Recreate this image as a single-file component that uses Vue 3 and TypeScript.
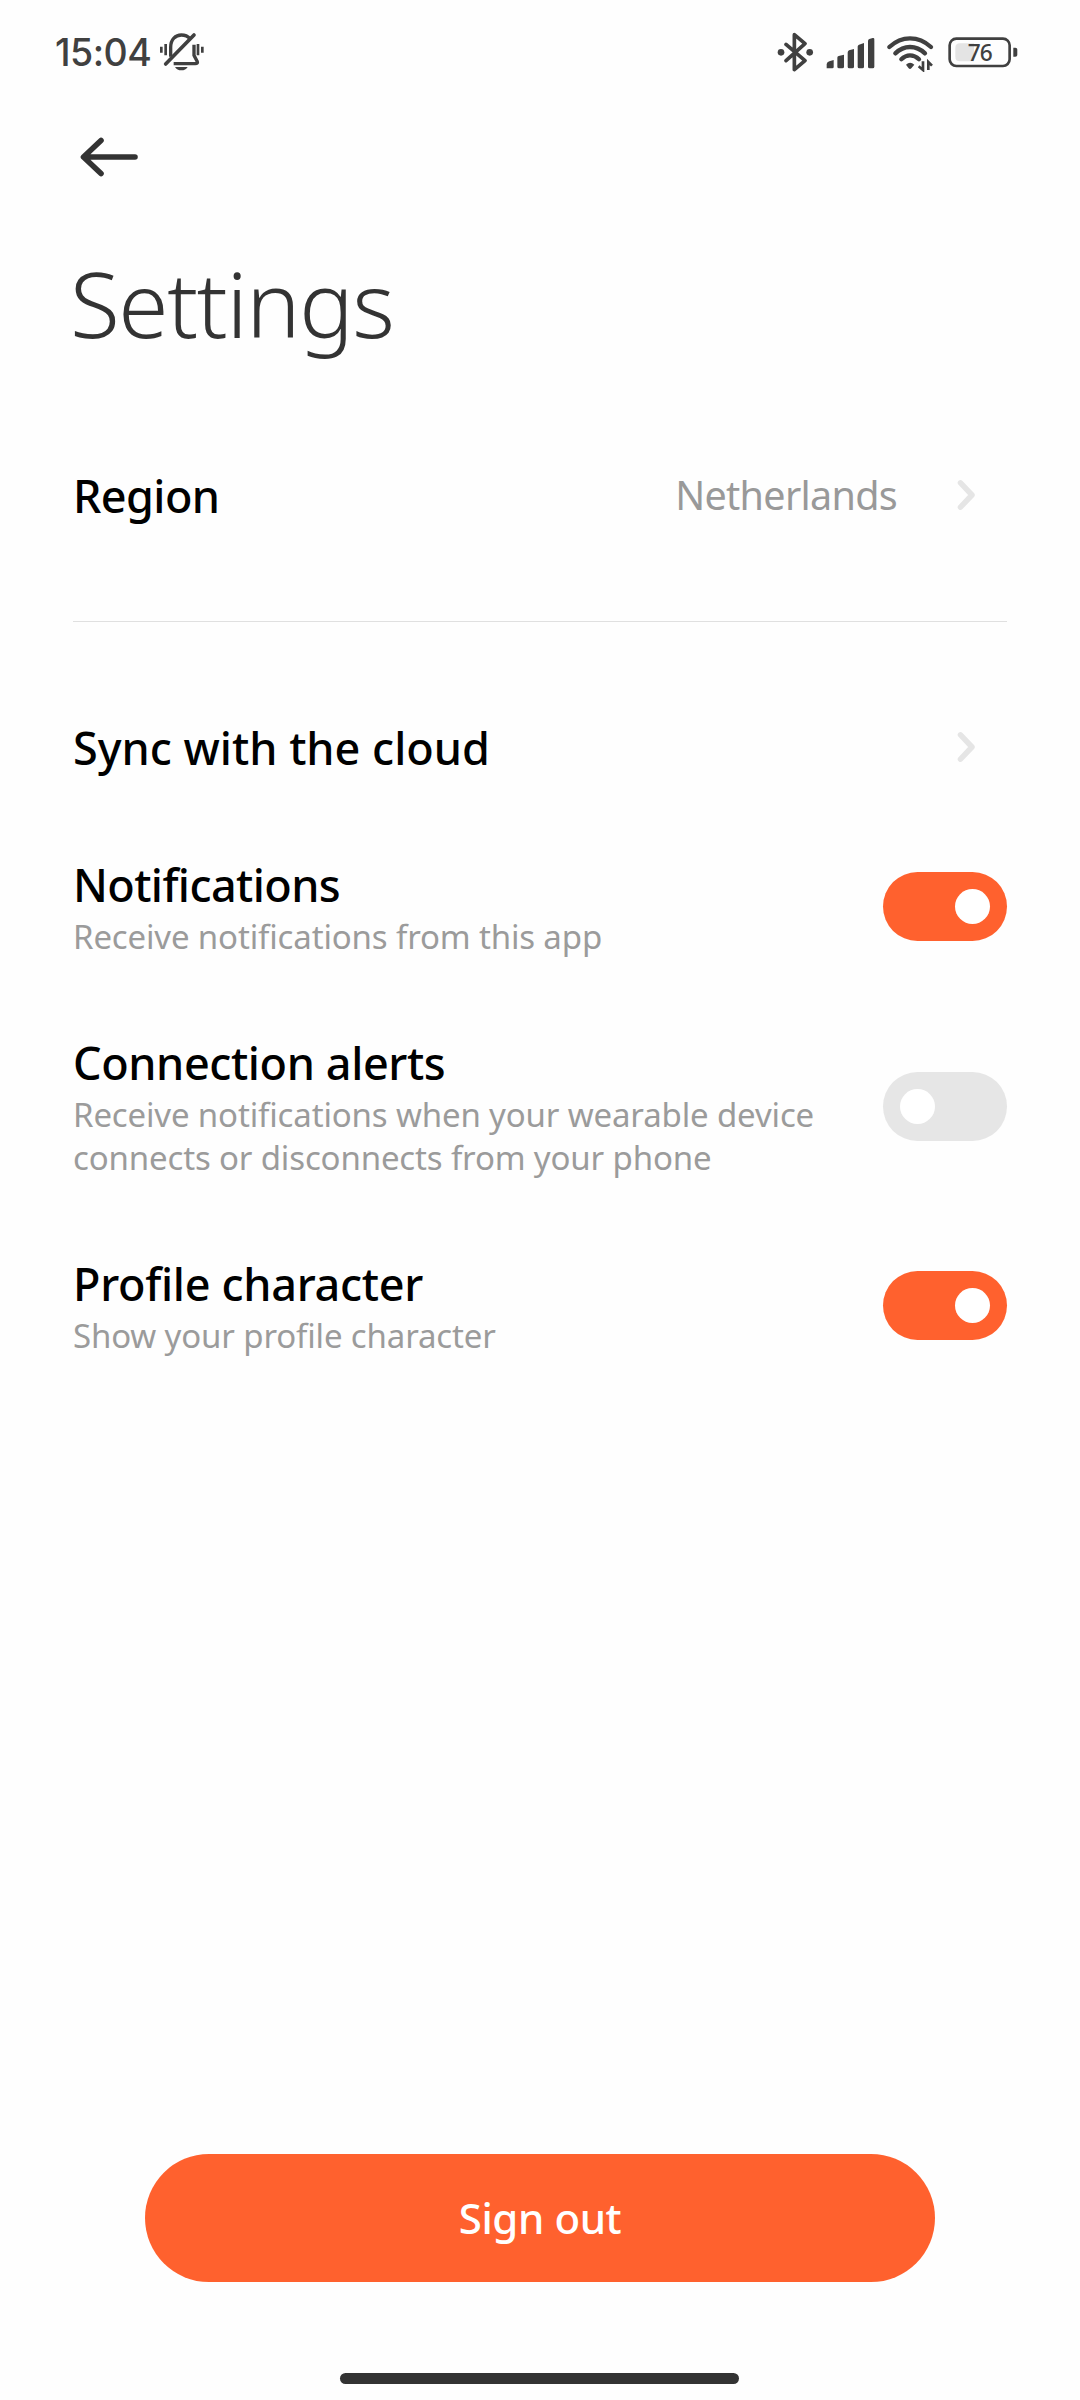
<script setup lang="ts">
import { ref } from 'vue'

interface Toggle {
  title: string
  text: string
  on: boolean
  cls: string
}

const toggles = ref<Toggle[]>([
  { title: 'Notifications', text: 'Receive notifications from this app', on: true, cls: 'notifications' },
  { title: 'Connection alerts', text: 'Receive notifications when your wearable device connects or disconnects from your phone', on: false, cls: 'alerts' },
  { title: 'Profile character', text: 'Show your profile character', on: true, cls: 'profile' },
])
</script>

<template>
  <div class="screen">
    <header class="status">
      <span class="time">15:04</span>
      <svg class="bell" viewBox="358 38 138 118" width="46" height="39.33" fill="none" stroke="#404040" stroke-width="10">
        <path d="M393 112V84C393 60 408 47 425 47C436 47 445 51 451 58" />
        <path d="M463 76V108L473 127Q475 133 467 133H402" />
        <path d="M378 134L463 47" stroke-linecap="round" stroke-width="11" />
        <path d="M365 82V100M378 74V108M475 74V108M488 82V100" stroke-width="8" />
        <path d="M406 143H444Q438 153 425 153Q412 153 406 143Z" fill="#404040" stroke="none" />
      </svg>
      <svg class="sys" viewBox="50 35 730 122" width="243.33" height="40.67" fill="none" stroke="#404040">
        <path d="M80 72L137 121L105 148V43L137 70L80 121" stroke-width="11" stroke-linejoin="round" stroke-linecap="round" />
        <circle cx="65" cy="96" r="10" fill="#404040" stroke="none" />
        <circle cx="151" cy="96" r="10" fill="#404040" stroke="none" />
        <g fill="#404040" stroke="none">
          <path d="M202 144V131Q203 125 210 123L223 119V140Q223 144 219 144Z" />
          <path d="M234 139V112Q234 108 238 107L254 103V139Q254 144 249 144H239Q234 144 234 139Z" />
          <path d="M265 139V97Q265 92 269 90L284 86V139Q284 144 279 144H270Q265 144 265 139Z" />
          <path d="M295 139V79Q295 75 299 73L314 68V139Q314 144 309 144H300Q295 144 295 139Z" />
          <path d="M326 139V62Q326 58 330 56L340 53Q345 52 345 57V139Q345 144 340 144H331Q326 144 326 139Z" />
        </g>
        <path d="M390 80Q418 54 452 54Q487 54 515 80M408 99Q428 80 452 80Q477 80 497 99M426 117Q438 105 452 105Q467 105 479 117" stroke-width="13" stroke-linecap="round" />
        <path d="M440 133Q452 121 465 133L456 144Q452 148 448 144Z" fill="#404040" stroke="none" />
        <path d="M491 123V149L478 138M507 149V125L518 136" stroke-width="8" />
        <rect x="571" y="55" width="180" height="82" rx="20" stroke-width="8" />
        <path d="M602 69H644V123H602Q588 123 588 109V83Q588 69 602 69Z" fill="#e4e4e4" stroke="none" />
        <path d="M762 82H768Q774 82 774 88V103Q774 109 768 109H762Z" fill="#404040" stroke="none" />
        <text x="661" y="122" text-anchor="middle" class="pct">76</text>
      </svg>
    </header>

    <nav class="bar">
      <svg viewBox="0 0 60 40" width="60" height="40" fill="none" stroke="#333" stroke-width="5.6" stroke-linecap="round" stroke-linejoin="round">
        <path d="M22 3.500L4.500 20L22 36.500M5 20H56" />
      </svg>
    </nav>

    <h1>Settings</h1>

    <main>
      <div class="row link">
        <span class="title region">Region</span>
        <span class="value">Netherlands</span>
        <svg class="chev" viewBox="0 0 20 32" width="20" height="32"><path d="M3.500 3.800L15 16L3.500 28.200" /></svg>
      </div>
      <hr />
      <div class="row link">
        <span class="title sync">Sync with the cloud</span>
        <svg class="chev" viewBox="0 0 20 32" width="20" height="32"><path d="M3.500 3.800L15 16L3.500 28.200" /></svg>
      </div>
      <div v-for="t in toggles" :key="t.title" class="row setting" :class="t.cls">
        <div class="copy">
          <div class="title">{{ t.title }}</div>
          <p>{{ t.text }}</p>
        </div>
        <button class="switch" :class="{ on: t.on }" :aria-label="t.title" @click="t.on = !t.on"><i /></button>
      </div>
    </main>

    <footer>
      <button class="out">Sign out</button>
      <div class="home" />
    </footer>
  </div>
</template>

<style>
body { background: #fefefe; }
</style>

<style scoped>
.screen { box-sizing: border-box; width: 1080px; height: 2400px; display: flex; flex-direction: column; background: #fefefe; font-family: "Noto Sans", "Liberation Sans", sans-serif; color: #000; overflow: hidden; }
.status { height: 104px; flex: none; display: flex; align-items: center; padding: 0 21px 0 55px; box-sizing: border-box; }
.time { font: 500 37.5px Inter, sans-serif; letter-spacing: -0.5px; color: #404040; width: 104px; white-space: nowrap; }
.sys { margin-left: auto; margin-right: 40px; }
.pct { font: 500 68px "Noto Sans", sans-serif; letter-spacing: -3px; fill: #404040; stroke: none; }
.bar { height: 106px; flex: none; display: flex; align-items: center; padding-left: 79px; }
h1 { margin: 38px 0 0 70px; height: 110px; line-height: 110px; flex: none; font-size: 91px; font-weight: 300; letter-spacing: -1.35px; color: #333; }
main { flex: 1; padding: 82px 73px 0; }
.row { display: flex; align-items: center; }
.link { height: 110px; }
.title { font-size: 45px; line-height: 58px; font-weight: 500; letter-spacing: -0.4px; white-space: nowrap; }
.link .title { padding-top: 2px; }
.title.region, .notifications .title { letter-spacing: -0.6px; }
.title.sync { letter-spacing: 0; }
.profile .title { letter-spacing: -0.3px; }
.value { margin-left: auto; margin-right: 60px; font-size: 39.5px; letter-spacing: -0.7px; color: #999; }
.chev { margin-right: 30px; fill: none; stroke: #e5e5e5; stroke-width: 5.5; stroke-linecap: round; stroke-linejoin: round; }
.sync + .chev { margin-left: auto; }
hr { border: 0; height: 1px; background: #e0e0e0; margin: 71px 0 70px; }
.setting { justify-content: space-between; margin-bottom: 77px; }
.setting.notifications { margin-top: 54px; }
.copy p { margin: 1px 0 -1px; font-size: 33px; line-height: 43px; letter-spacing: -0.15px; color: #9b9b9b; width: 770px; }
.switch { flex: none; width: 124px; height: 69px; border: 0; border-radius: 35px; padding: 0 17px; background: #e6e6e6; display: flex; align-items: center; }
.switch i { width: 35px; height: 35px; border-radius: 50%; background: #fff; }
.switch.on { background: #ff612e; justify-content: flex-end; }
footer { height: 246px; flex: none; display: flex; flex-direction: column; align-items: center; }
.out { width: 790px; height: 128px; border: 0; border-radius: 64px; padding: 0 0 2px; background: #ff612e; color: #fff; font: 500 42px "Noto Sans", sans-serif; letter-spacing: -0.4px; }
.home { width: 399px; height: 11px; border-radius: 6px; background: #333; margin: 91px 1px 0 0; }
</style>
